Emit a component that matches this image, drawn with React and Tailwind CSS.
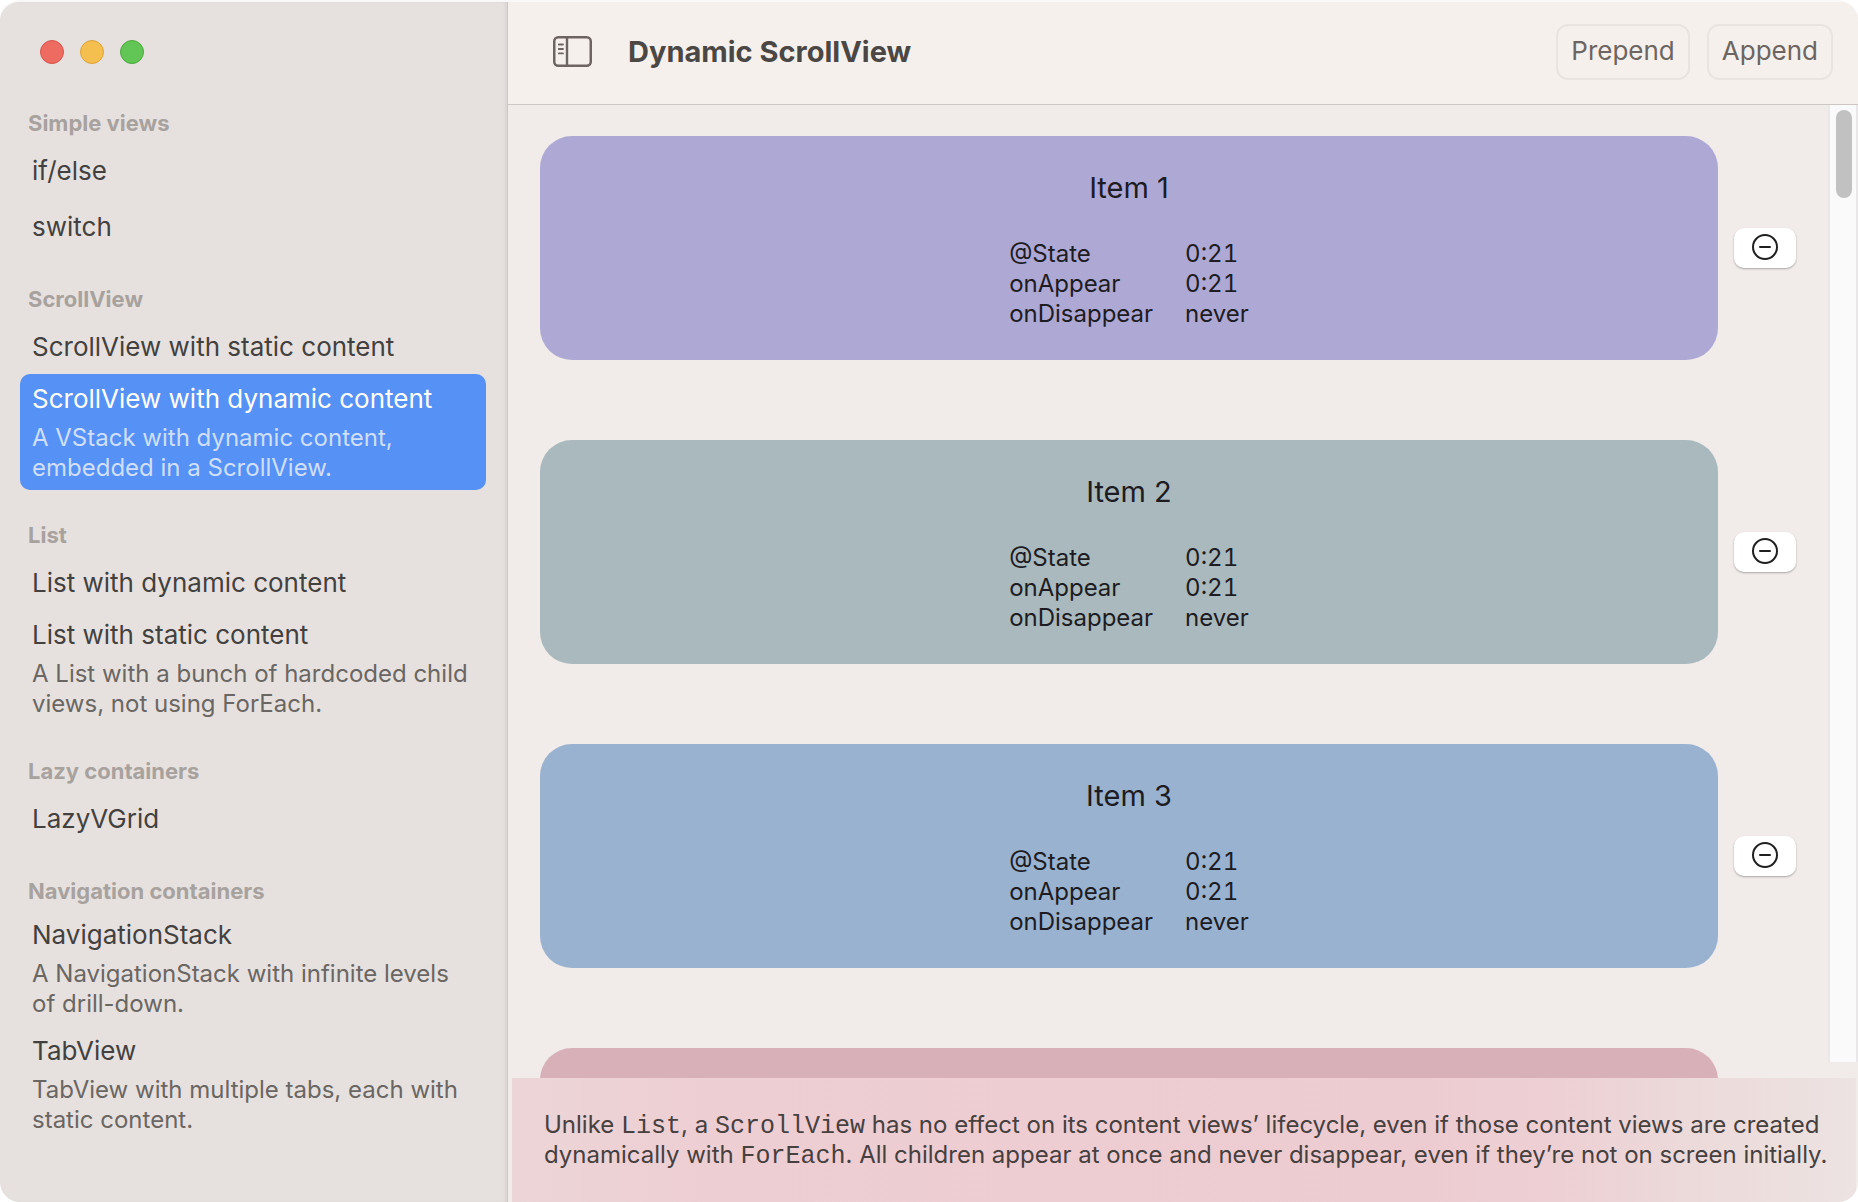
const sections = [
  { title: "Simple views", items: [{ name: "if/else" }, { name: "switch" }] },
  {
    title: "ScrollView",
    items: [
      { name: "ScrollView with static content" },
      {
        name: "ScrollView with dynamic content",
        lines: ["A VStack with dynamic content,", "embedded in a ScrollView."],
        selected: true,
      },
    ],
  },
  {
    title: "List",
    items: [
      { name: "List with dynamic content" },
      {
        name: "List with static content",
        lines: ["A List with a bunch of hardcoded child", "views, not using ForEach."],
      },
    ],
  },
  { title: "Lazy containers", items: [{ name: "LazyVGrid" }] },
  {
    title: "Navigation containers",
    items: [
      {
        name: "NavigationStack",
        lines: ["A NavigationStack with infinite levels", "of drill-down."],
      },
      {
        name: "TabView",
        lines: ["TabView with multiple tabs, each with", "static content."],
      },
    ],
  },
];

const cards = [
  { title: "Item 1", color: "bg-[#aea8d5]" },
  { title: "Item 2", color: "bg-[#a9b9bd]" },
  { title: "Item 3", color: "bg-[#99b2d0]" },
];

const states = [
  ["@State", "0:21"],
  ["onAppear", "0:21"],
  ["onDisappear", "never"],
];

function SidebarItem({ name, lines, selected }) {
  return (
    <li>
      <a
        href="#"
        aria-current={selected ? "page" : undefined}
        className={`flex min-h-14 flex-col justify-center whitespace-nowrap rounded-[10px] pl-3 ${
          lines ? "gap-[7px] pb-[7px] pt-2" : "pt-0.5"
        } ${selected ? "bg-[#5691f6] text-white" : "text-[#434140]"}`}
      >
        <span className="text-[26px] leading-[34px]">{name}</span>
        {lines && (
          <span className={`text-2xl leading-[30px] ${selected ? "text-[#cfdffc]" : "text-[#6a6663]"}`}>
            {lines[0]}
            <br />
            {lines[1]}
          </span>
        )}
      </a>
    </li>
  );
}

function Sidebar() {
  return (
    <aside className="w-[508px] shrink-0 border-r border-[#cdc8c5] bg-[#e6e1de] shadow-[inset_-2px_0_3px_rgba(0,0,0,0.05)]">
      <div className="flex h-[76px] gap-4 pl-10 pt-[38px]">
        <button aria-label="Close" className="size-6 rounded-full border border-[#d5554b] bg-[#ed6b60]" />
        <button aria-label="Minimize" className="size-6 rounded-full border border-[#dba33d] bg-[#f5bf4f]" />
        <button aria-label="Zoom" className="size-6 rounded-full border border-[#4da73f] bg-[#62c656]" />
      </div>
      <nav className="pl-5 pr-[21px]">
        {sections.map((section) => (
          <section key={section.title}>
            <h2 className="h-16 pl-2 pt-[26px] text-[22px] font-bold leading-[38px] text-[#a8a29f]">
              {section.title}
            </h2>
            <ul>
              {section.items.map((item) => (
                <SidebarItem key={item.name} {...item} />
              ))}
            </ul>
          </section>
        ))}
      </nav>
    </aside>
  );
}

function Toolbar() {
  const buttonClass = "h-14 rounded-xl border-2 border-[#eae4e0] px-[13px] text-[26px] leading-8 pb-0.5 text-[#6c6561]";
  return (
    <header className="flex h-[103px] shrink-0 items-center border-b border-[#cdc6c2] bg-[#f6f0ec] pb-0.5 pl-[45px] pr-[25px]">
      <button aria-label="Toggle sidebar" className="mb-0.5 text-[#6c6561]">
        <svg width="39" height="31" viewBox="0 0 39 31" fill="none" stroke="currentColor">
          <rect x="1.25" y="1.25" width="36.5" height="28.5" rx="4" strokeWidth="2.5" />
          <path d="M14 1.5V29.5" strokeWidth="2.4" />
          <path d="M5.8 8.5H10M5.8 13H10M5.8 17.4H10" strokeWidth="1.8" strokeLinecap="round" />
        </svg>
      </button>
      <h1 className="ml-9 flex-1 whitespace-nowrap text-[29px] font-bold leading-10 text-[#4a4745]">
        Dynamic ScrollView
      </h1>
      <div className="flex gap-[17px]">
        <button className={buttonClass}>Prepend</button>
        <button className={buttonClass}>Append</button>
      </div>
    </header>
  );
}

function Card({ title, color }) {
  return (
    <li className="flex shrink-0 items-center gap-4">
      <article className={`flex h-56 flex-1 flex-col items-center rounded-4xl pt-8 text-[#1d1c22] ${color}`}>
        <h2 className="text-[29px] leading-10">{title}</h2>
        <table className="mt-[31px] text-left text-2xl leading-[30px]">
          <tbody>
            {states.map(([label, value]) => (
              <tr key={label}>
                <th className="p-0 pr-8 font-normal leading-[30px]">{label}</th>
                <td className="p-0 leading-[30px] tabular-nums">{value}</td>
              </tr>
            ))}
          </tbody>
        </table>
      </article>
      <button
        aria-label={`Remove ${title}`}
        className="flex h-10 w-[62px] items-center justify-center rounded-[10px] bg-white pb-0.5 shadow-[0_1px_2px_rgba(0,0,0,0.3)]"
      >
        <svg width="26" height="26" viewBox="0 0 26 26" fill="none" stroke="#1f1f1f" strokeWidth="2">
          <circle cx="13" cy="13" r="12" />
          <path d="M8 13H18" strokeLinecap="round" />
        </svg>
      </button>
    </li>
  );
}

function Code({ children }) {
  return <code className="font-['Liberation_Mono',monospace] text-[25px] leading-none">{children}</code>;
}

export default function App() {
  return (
    <div className="h-screen bg-white font-['Inter',sans-serif]">
      <div className="flex h-full overflow-hidden rounded-[20px] border-t-2 border-[#f8f8f8]">
        <Sidebar />
        <main className="flex min-w-0 flex-1 flex-col bg-[#f1ecea]">
          <Toolbar />
          <div className="flex min-h-0 flex-1">
            <ul className="flex min-w-0 flex-1 flex-col gap-20 overflow-hidden px-8 pt-[31px]">
              {cards.map((card) => (
                <Card key={card.title} {...card} />
              ))}
              <li className="mr-[78px] h-56 shrink-0 rounded-4xl bg-[#d8b0b8]" />
            </ul>
            <div className="mb-4 w-[30px] shrink-0 border-x-2 border-[#e9e7e7] bg-[#fafafa] px-1.5 pt-[5px]">
              <div className="h-[88px] w-4 rounded-full bg-[#c1c1c1]" />
            </div>
          </div>
          <footer className="ml-1 mr-0.5 shrink-0 whitespace-nowrap bg-[linear-gradient(to_right,#ecd5d7,#edced3_15%,#edccd1_68%,#edd0d4_78%,#ecdcdb_90%,#ece3e2)] p-8 text-2xl leading-[30px] text-[#46403f]">
            <p>
              Unlike <Code>List</Code>, a <Code>ScrollView</Code> has no effect on its content views’ lifecycle, even
              if those content views are created
              <br />
              dynamically with <Code>ForEach</Code>. All children appear at once and never disappear, even if they’re
              not on screen initially.
            </p>
          </footer>
        </main>
      </div>
    </div>
  );
}
